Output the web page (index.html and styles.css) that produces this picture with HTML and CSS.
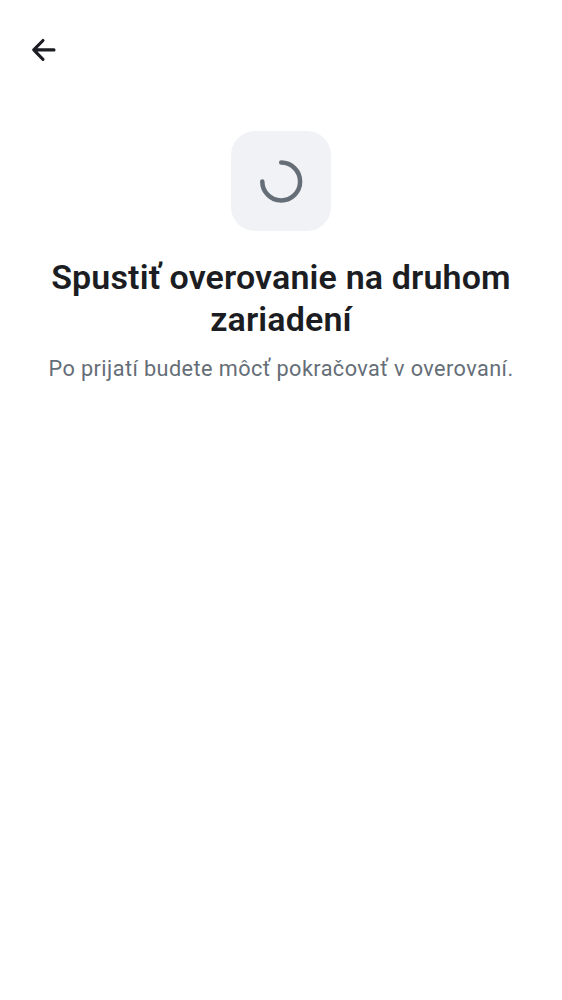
FILE: index.html
```html
<!DOCTYPE html>
<html lang="sk">
<head>
<meta charset="utf-8">
<title>Overovanie</title>
<link rel="stylesheet" href="styles.css">
</head>
<body>
<header class="top-bar">
<button class="back" aria-label="Späť"><svg width="24" height="24" viewBox="0 0 24 24"><path d="M22 11.9H2M11 2.5L1.7 11.9l9.3 9.4"/></svg></button>
</header>
<main class="content">
<div class="badge"><svg width="44" height="44" viewBox="0 0 44 44"><path d="M22.2 3.6A18.9 18.9 0 1 1 3.3 22.5"/></svg></div>
<h1 class="title">Spustiť overovanie na druhom zariadení</h1>
<p class="subtitle">Po prijatí budete môcť pokračovať v overovaní.</p>
</main>
</body>
</html>
```
FILE: styles.css
```css
body {
  margin: 0;
  min-height: 1000px;
  background: #fff;
  font-family: Roboto, sans-serif;
}
.top-bar {
  display: flex;
  align-items: center;
  height: 100px;
  padding: 0 32px;
  box-sizing: border-box;
}
.back {
  display: flex;
  padding: 0;
  border: 0;
  background: none;
}
.back svg, .badge svg {
  overflow: visible;
  fill: none;
  stroke-linecap: round;
  stroke-linejoin: round;
}
.back svg {
  stroke: #1b1d22;
  stroke-width: 3.1;
}
.content {
  display: flex;
  flex-direction: column;
  align-items: center;
  padding: 31px 40px 0;
  text-align: center;
}
.badge {
  display: flex;
  align-items: center;
  justify-content: center;
  width: 100px;
  height: 100px;
  border-radius: 24px;
  background: #f0f2f5;
}
.badge svg {
  stroke: #656e77;
  stroke-width: 4.5;
}
.title {
  margin: 25px 0 0;
  font-size: 34px;
  line-height: 42px;
  font-weight: 600;
  letter-spacing: 0.15px;
  color: #1b1d22;
}
.subtitle {
  margin: 14px 0 0;
  font-size: 21.7px;
  line-height: 30px;
  letter-spacing: 0.42px;
  white-space: nowrap;
  color: #656e77;
}
```
